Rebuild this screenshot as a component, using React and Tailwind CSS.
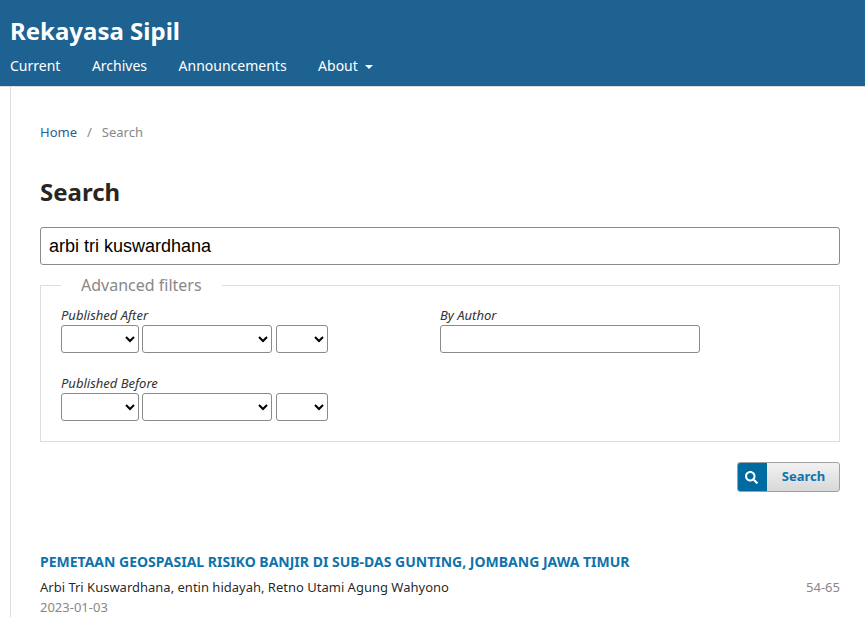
import React from 'react';
import { FaSearch } from 'react-icons/fa';

const NAV = ['Current', 'Archives', 'Announcements'];

function DateSelects() {
  const cls = 'h-7 rounded-[3px] border border-[#8a8a8a] bg-white text-sm text-black';
  return (
    <div className="flex">
      <select className={`${cls} w-[78px]`}><option></option></select>
      <select className={`${cls} ml-[3px] w-[130px]`}><option></option></select>
      <select className={`${cls} ml-[4px] w-[52px]`}><option></option></select>
    </div>
  );
}

function Label({ children }) {
  return <div className="h-[19px] text-[13px] leading-[19px] italic text-[#333]">{children}</div>;
}

export default function App() {
  return (
    <div className="h-[617px] overflow-hidden bg-white font-['Noto_Sans',sans-serif] text-[rgba(0,0,0,0.87)]">
      <header className="h-[87px] border-b border-[#dddddd] bg-[#1e6292] px-2.5 text-white">
        <div className="pt-[13px] text-2xl leading-[36px] font-bold">Rekayasa Sipil</div>
        <nav className="mt-[4px] flex gap-[31.5px] text-sm leading-[26px]">
          {NAV.map((n) => <a key={n}>{n}</a>)}
          <a className="flex items-center">
            About
            <span className="ml-[7px] mt-[1px] h-0 w-0 border-x-4 border-t-4 border-x-transparent border-t-white" />
          </a>
        </nav>
      </header>

      <div className="ml-2.5 h-[530px] border-l border-[#dddddd] pl-[29px] pr-[25px]">
        <div className="flex pt-[35px] text-[13px] leading-5">
          <a className="text-[#1e6292]">Home</a>
          <span className="mx-[10px] text-[#888]">/</span>
          <span className="text-[#888]">Search</span>
        </div>

        <h1 className="mt-[32px] text-2xl leading-[36px] font-bold text-[#2a2523]">Search</h1>

        <input
          readOnly
          value="arbi tri kuswardhana"
          className="mt-[17px] block h-[38px] w-full rounded-[3px] border border-[#8a8a8a] px-2 font-['Liberation_Sans',sans-serif] text-lg text-black"
        />

        <fieldset className="mt-[10px] h-[167px] border border-[#dddddd] px-5 pb-5">
          <legend className="px-5 text-base leading-[21px] text-[#888]">Advanced filters</legend>
          <div className="flex pt-[10px]">
            <div className="w-[379px]">
              <Label>Published After</Label>
              <DateSelects />
              <div className="mt-[21px]">
                <Label>Published Before</Label>
                <DateSelects />
              </div>
            </div>
            <div>
              <Label>By Author</Label>
              <input readOnly className="block h-7 w-[260px] rounded-[3px] border border-[#8a8a8a] bg-white" />
            </div>
          </div>
        </fieldset>

        <div className="mt-[20px] flex justify-end">
          <button className="flex h-[30px] w-[103px] overflow-hidden rounded-[3px] border border-[#a0a0a0] bg-gradient-to-b from-[#f2f2f2] to-[#d8d8d8] text-[13px] font-bold text-[#0d74ad]">
            <span className="-my-px -ml-px flex h-[30px] w-[30px] items-center justify-center bg-[#006ba0] pr-px text-white">
              <FaSearch className="size-[13px]" />
            </span>
            <span className="flex h-full flex-1 items-center justify-center pl-px">Search</span>
          </button>
        </div>

        <h2 className="mt-[60px] text-sm leading-5 font-bold text-[#0e73ab]">
          PEMETAAN GEOSPASIAL RISIKO BANJIR DI SUB-DAS GUNTING, JOMBANG JAWA TIMUR
        </h2>
        <div className="mt-[5px] flex justify-between text-[13px] leading-5">
          <span>Arbi Tri Kuswardhana, entin hidayah, Retno Utami Agung Wahyono</span>
          <span className="text-[#888]">54-65</span>
        </div>
        <div className="text-[13px] leading-5 text-[#888]">2023-01-03</div>
      </div>
    </div>
  );
}
